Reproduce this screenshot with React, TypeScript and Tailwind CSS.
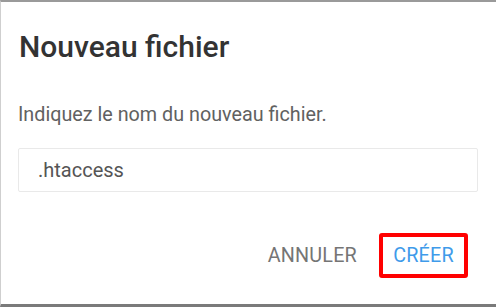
export default function App() {
  return (
    <div className="h-[307px] w-[496px] overflow-hidden bg-white font-['Roboto',sans-serif]">
      <div className="flex h-full flex-col border-t-2 border-b-[3px] border-l border-t-[#9a9a9a] border-b-[#7a7a7a] border-l-[#cfcfcf] bg-white">
        <h2 className="ml-[18px] mt-[27px] text-[30px] leading-[36px] font-medium text-[#333333]">
          Nouveau fichier
        </h2>
        <p className="ml-[17px] mt-[38px] text-[19.75px] leading-[24px] text-[#616161]">
          Indiquez le nom du nouveau fichier.
        </p>
        <div className="ml-[17px] mt-[21px] flex h-[44px] w-[460px] items-center rounded-[2px] border border-[#e9e9e9] px-[19px]">
          <span className="text-[20px] text-[#555555]">.htaccess</span>
        </div>
        <div className="mt-[41px] mr-[28px] flex items-center justify-end gap-[22px]">
          <button className="text-[19.75px] font-normal tracking-[0.2px] text-[#757575]">
            ANNULER
          </button>
          <button className="flex h-[45px] w-[89px] items-center justify-center rounded-[3px] border-4 border-[#ff0000] text-[19.75px] tracking-[0.2px] text-[#3f9bea]">
            CRÉER
          </button>
        </div>
      </div>
    </div>
  );
}
